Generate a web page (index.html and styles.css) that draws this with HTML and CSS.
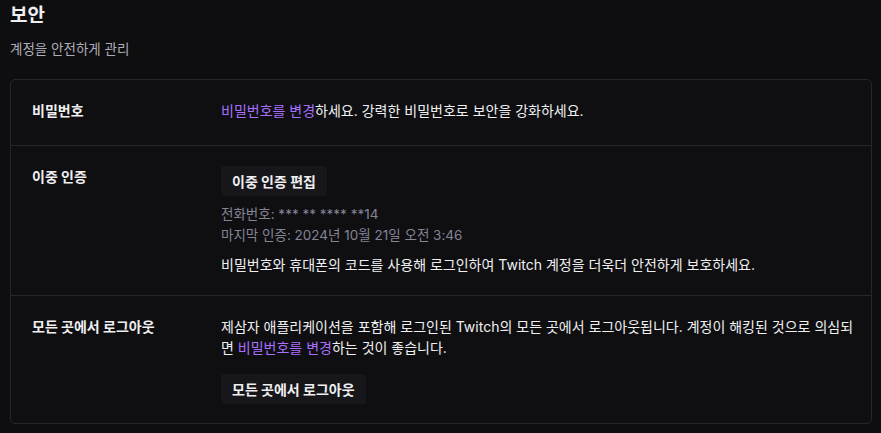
FILE: index.html
```html
<!DOCTYPE html>
<html lang="ko">
<head>
<meta charset="utf-8">
<link rel="stylesheet" href="styles.css">
</head>
<body>
<div class="page">
  <header class="head">
    <h1 class="title">보안</h1>
    <p class="subtitle">계정을 안전하게 관리</p>
  </header>
  <section class="card">
    <div class="row row-first">
      <div class="label">비밀번호</div>
      <div class="content">
        <p class="text"><a class="link">비밀번호를 변경</a>하세요. 강력한 비밀번호로 보안을 강화하세요.</p>
      </div>
    </div>
    <div class="row">
      <div class="label">이중 인증</div>
      <div class="content">
        <button class="btn">이중 인증 편집</button>
        <div class="meta">
          <p class="muted">전화번호: *** ** **** **14</p>
          <p class="muted">마지막 인증: 2024년 10월 21일 오전 3:46</p>
        </div>
        <p class="text desc">비밀번호와 휴대폰의 코드를 사용해 로그인하여 Twitch 계정을 더욱더 안전하게 보호하세요.</p>
      </div>
    </div>
    <div class="row row-last">
      <div class="label">모든 곳에서 로그아웃</div>
      <div class="content">
        <p class="text">제삼자 애플리케이션을 포함해 로그인된 Twitch의 모든 곳에서 로그아웃됩니다. 계정이 해킹된 것으로 의심되면 <a class="link">비밀번호를 변경</a>하는 것이 좋습니다.</p>
        <button class="btn btn-gap">모든 곳에서 로그아웃</button>
      </div>
    </div>
  </section>
</div>
</body>
</html>
```

FILE: styles.css
```css
* { box-sizing: border-box; }
html, body {
  margin: 0;
  background: #0e0e10;
}
body {
  font-family: Inter, "Noto Sans CJK KR", sans-serif;
  font-size: 14px;
  color: #efeff1;
}
.page {
  padding: 0 9px 0 10px;
}
.head {
  padding-top: 4px;
  height: 79px;
}
.title {
  margin: 0;
  font-size: 19px;
  font-weight: 700;
  line-height: 24px;
  color: #efeff1;
}
.subtitle {
  margin: 11px 0 0;
  font-size: 13.5px;
  line-height: 20px;
  color: #adadb8;
}
.card {
  background: #0f0f12;
  border: 1px solid #26262c;
  border-radius: 5px;
}
.row {
  display: flex;
  padding: 20px 14px 20px 21px;
  border-top: 1px solid #26262c;
}
.row-first {
  border-top: none;
  padding-bottom: 24px;
}
.row-last {
  padding-bottom: 19px;
}
.label {
  width: 189px;
  flex: none;
  font-weight: 700;
  line-height: 21px;
}
.content {
  flex: 1;
  min-width: 0;
}
.text {
  margin: 0;
  line-height: 21px;
}
.link {
  color: #a970ff;
  text-decoration: none;
  cursor: pointer;
}
.btn {
  display: block;
  height: 30px;
  padding: 0 11px;
  border: none;
  border-radius: 4px;
  background: #17171b;
  color: #efeff1;
  font-family: inherit;
  font-size: 14px;
  font-weight: 700;
}
.btn-gap {
  margin-top: 16px;
}
.meta {
  margin-top: 8px;
}
.muted {
  margin: 0;
  font-size: 13.5px;
  line-height: 21px;
  color: #848494;
}
.desc {
  margin-top: 8px;
}
```
